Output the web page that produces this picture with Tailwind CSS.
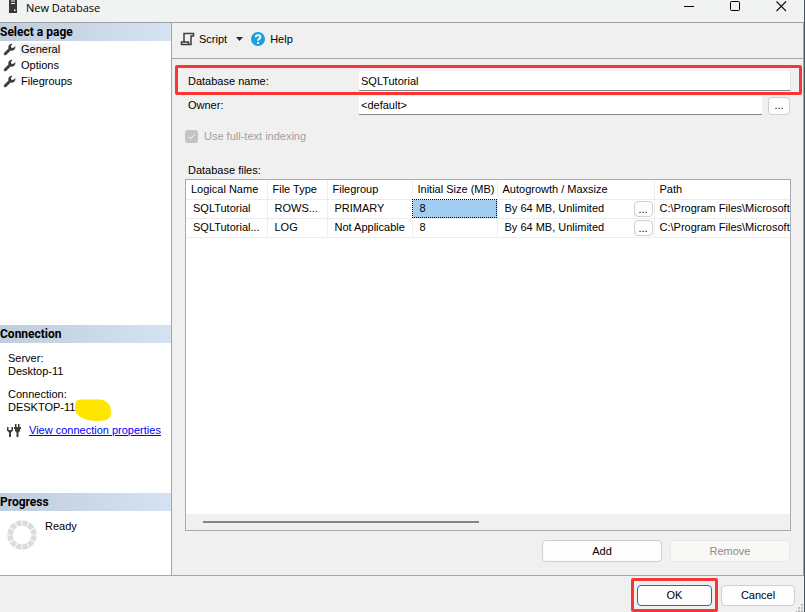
<!DOCTYPE html>
<html lang="en">
<head>
    <meta charset="UTF-8">
    <meta name="viewport" content="width=device-width, initial-scale=1.0">
    <title>New Database</title>
    <script src="https://cdn.jsdelivr.net/npm/@tailwindcss/browser@4"></script>
</head>
<body class="bg-[#f0f0f0] font-['Liberation_Sans',Arial,sans-serif] text-[11px] leading-[13px] text-black">
    <div class="relative flex h-screen flex-col overflow-hidden border-r border-[#46525c]">

        <!-- Title bar -->
        <header class="flex h-[23px] shrink-0 items-start justify-between border-b border-[#9c9ea1] bg-[#f1f3f3] pl-2">
            <div class="flex">
                <svg class="h-[14px] w-[10px]" viewBox="0 0 10 14" aria-hidden="true">
                    <path d="M1 0h8v13H1z" fill="#383838"/>
                    <path d="M3 1h4M3 3.500h4" stroke="#fff"/>
                    <path d="M6 9.500h1.500v1.500H6z" fill="#fff"/>
                </svg>
                <h1 class="ml-2 font-['Open_Sans','Noto_Sans',sans-serif] text-[11px] leading-[15px]">New Database</h1>
            </div>
            <div class="flex gap-[22px] pr-[11px]">
                <button aria-label="Minimize" class="h-3 w-6"><svg viewBox="0 0 24 12"><path d="M7 6.500h10" stroke="#000"/></svg></button>
                <button aria-label="Maximize" class="h-3 w-6"><svg viewBox="0 0 24 12"><rect x="7.500" y="1.500" width="9" height="9" rx="1" fill="none" stroke="#000"/></svg></button>
                <button aria-label="Close" class="h-3 w-6"><svg viewBox="0 0 24 12"><path d="M7.500 1.500l9.500 9.500M17 1.500L7.500 11" stroke="#1a1428" stroke-width="1.200"/></svg></button>
            </div>
        </header>

        <div class="flex min-h-0 flex-1 border-r border-b border-[#a5a6a9]">
            <!-- Sidebar -->
            <aside class="flex w-[172px] shrink-0 flex-col border-r border-[#a5a6a9] bg-white">
                <nav class="flex-1">
                    <h2 class="h-[18px] bg-linear-to-r from-[#bfcddd] to-[#d5e2f2] font-[Roboto,sans-serif] text-[12px] leading-[18px] font-bold">Select a page</h2>
                    <a href="#" class="flex h-4 items-center gap-1 pl-[3px]">
                        <svg class="h-[13px] w-[13px]" viewBox="0 0 13 13"><path d="M2.300 10.700L7.300 5.700" stroke="#3d3d3d" stroke-width="3" stroke-linecap="round"/><path d="M9.800.8L7.900 2.800l.4 1.900 1.900.4 2-2c.7 2.400-1 4.700-3.200 4.700C6.500 7.800 5 6 5.300 3.800 5.600 1.600 7.800.2 9.800.8z" fill="#3d3d3d"/></svg>
                        <span class="bg-[#f0f0f0] px-px">General</span>
                    </a>
                    <a href="#" class="flex h-4 items-center gap-1 pl-[3px]">
                        <svg class="h-[13px] w-[13px]" viewBox="0 0 13 13"><path d="M2.300 10.700L7.300 5.700" stroke="#3d3d3d" stroke-width="3" stroke-linecap="round"/><path d="M9.800.8L7.900 2.800l.4 1.900 1.900.4 2-2c.7 2.400-1 4.700-3.200 4.700C6.500 7.800 5 6 5.300 3.800 5.600 1.600 7.800.2 9.800.8z" fill="#3d3d3d"/></svg>
                        <span class="px-px">Options</span>
                    </a>
                    <a href="#" class="flex h-4 items-center gap-1 pl-[3px]">
                        <svg class="h-[13px] w-[13px]" viewBox="0 0 13 13"><path d="M2.300 10.700L7.300 5.700" stroke="#3d3d3d" stroke-width="3" stroke-linecap="round"/><path d="M9.800.8L7.900 2.800l.4 1.900 1.900.4 2-2c.7 2.400-1 4.700-3.200 4.700C6.500 7.800 5 6 5.300 3.800 5.600 1.600 7.800.2 9.800.8z" fill="#3d3d3d"/></svg>
                        <span class="px-px">Filegroups</span>
                    </a>
                </nav>

                <section class="h-[168px]">
                    <h2 class="h-[18px] bg-linear-to-r from-[#bfcddd] to-[#d5e2f2] font-[Roboto,sans-serif] text-[12px] leading-[18px] font-bold">Connection</h2>
                    <div class="pt-[9px] pl-2">
                        <p>Server:<br>Desktop-11</p>
                        <p class="mt-2.5">Connection:<br>DESKTOP-11</p>
                    </div>
                    <div class="relative mt-[9px] flex items-center gap-2 pl-[7px]">
                        <!-- user name is covered by a marker stroke -->
                        <svg class="absolute -top-6 left-[75px] h-[23px] w-9" viewBox="0 0 36 23" aria-hidden="true"><path d="M1 2Q3 0 7 .5H25Q32 1 35 7Q37 14 35 18Q33 22 23 22Q10 22 4 17Q-1 13 0 8Z" fill="#ffe600"/></svg>
                        <svg class="h-[15px] w-[14px]" viewBox="0 0 14 15" aria-hidden="true"><path d="M0 4v3.500l2 2V14h2V9.500l2-2V4H4.500v3h-3V4zM8 1h1.500v3H11V1h1.500v3H14v2h-1v2l-1.500 1.500V14h-2V9.500L8 8V6H7V4h1z" fill="#3d3d3d"/></svg>
                        <a href="#" class="text-[#0000ff] underline">View connection properties</a>
                    </div>
                </section>

                <section class="h-[82px]">
                    <h2 class="h-[18px] bg-linear-to-r from-[#bfcddd] to-[#d5e2f2] font-[Roboto,sans-serif] text-[12px] leading-[18px] font-bold">Progress</h2>
                    <div class="flex gap-2 pt-[9px] pl-[7px]">
                        <svg class="h-[30px] w-[30px]" viewBox="0 0 30 30" aria-hidden="true"><circle cx="15" cy="15" r="12" fill="none" stroke="#dcdcdc" stroke-width="5.500" pathLength="120" stroke-dasharray="8.500 1.500" stroke-dashoffset="-.75"/></svg>
                        <p>Ready</p>
                    </div>
                </section>
            </aside>

            <!-- Page content -->
            <main class="flex min-w-0 flex-1 flex-col">
                <div class="flex h-9 shrink-0 items-center border-b border-[#a5a6a9] pb-[3px] pl-2">
                    <button class="flex items-center gap-1">
                        <svg class="h-[14px] w-[15px]" viewBox="0 0 15 14" aria-hidden="true"><path d="M4 10V1.500H13.500V4H11V12.500H1.500V10H8.500V12.500" fill="none" stroke="#3d3d3d" stroke-width="1.500"/></svg>
                        <span>Script</span>
                    </button>
                    <button aria-label="Script options" class="ml-[9px]"><svg class="h-1 w-[7px]" viewBox="0 0 7 4"><path d="M0 0h7L3.500 4z" fill="#2b2b2b"/></svg></button>
                    <button class="ml-2 flex items-center gap-[5px]">
                        <svg class="h-[14px] w-[14px]" viewBox="0 0 14 14" aria-hidden="true"><circle cx="7" cy="7" r="7" fill="#1c9fe0"/><path d="M4.700 5.200C4.700 2.300 9.500 2.400 9.400 5.100C9.300 6.900 7 6.700 7 8.800M7 10v2" fill="none" stroke="#fff" stroke-width="1.800"/></svg>
                        <span>Help</span>
                    </button>
                </div>

                <form class="flex min-h-0 flex-1 flex-col" onsubmit="return false">
                    <div class="mt-1.5 mr-px ml-[3px] flex h-[30px] items-center rounded-xs border-3 border-[#fb3434] pt-0.5 pr-2 pl-2.5">
                        <label for="db-name" class="w-[171px] shrink-0">Database name:</label>
                        <input id="db-name" type="text" value="SQLTutorial" class="h-5 min-w-0 flex-1 border-r border-b border-r-[#e4e4e4] border-b-[#858585] bg-white px-0.5 outline-none">
                    </div>
                    <div class="mt-px flex items-center pr-[13px] pl-4">
                        <label for="db-owner" class="w-[171px] shrink-0">Owner:</label>
                        <input id="db-owner" type="text" value="&lt;default&gt;" class="h-[19px] min-w-0 flex-1 border-b border-[#858585] bg-white px-0.5 outline-none">
                        <button type="button" aria-label="Browse owners" class="ml-1.5 h-[18px] w-[22px] rounded-sm border border-[#cfcfcf] bg-[#fdfdfd]">...</button>
                    </div>
                    <div class="mt-[13px] flex h-4 items-center gap-1.5 pl-[13px] text-[#a0a0a0]">
                        <span class="relative flex">
                            <input id="fulltext" type="checkbox" checked disabled class="h-[13px] w-[13px] appearance-none rounded-[3px] bg-[#c3c3c3]">
                            <svg class="pointer-events-none absolute inset-0 h-[13px] w-[13px]" viewBox="0 0 13 13" aria-hidden="true"><path d="M3.500 6.800l2 2 4.200-4.300" fill="none" stroke="#fff"/></svg>
                        </span>
                        <label for="fulltext">Use full-text indexing</label>
                    </div>

                    <h3 class="mt-[19px] pl-4 leading-[14px]">Database files:</h3>
                    <div class="mt-0.5 mr-3 ml-[13px] flex min-h-0 flex-1 flex-col border border-[#a9abb0] bg-white">
                        <div class="min-h-0 flex-1 overflow-hidden">
                            <table class="w-full table-fixed text-left whitespace-nowrap [&_td]:overflow-hidden [&_td]:border-b [&_td]:border-[#ededed] [&_td]:pl-[7px] [&_td:last-child]:pl-[5px] [&_td:not(:last-child)]:border-r [&_th]:border-b [&_th]:border-[#ededed] [&_th]:pl-[5px] [&_th]:font-normal [&_th:not(:last-child)]:border-r">
                                <colgroup>
                                    <col class="w-[81px]">
                                    <col class="w-[60px]">
                                    <col class="w-[85px]">
                                    <col class="w-[85px]">
                                    <col class="w-[157px]">
                                    <col>
                                </colgroup>
                                <thead>
                                    <tr class="h-[19px]">
                                        <th>Logical Name</th>
                                        <th>File Type</th>
                                        <th>Filegroup</th>
                                        <th>Initial Size (MB)</th>
                                        <th>Autogrowth / Maxsize</th>
                                        <th>Path</th>
                                    </tr>
                                </thead>
                                <tbody>
                                    <tr class="h-[19px]">
                                        <td>SQLTutorial</td>
                                        <td>ROWS...</td>
                                        <td>PRIMARY</td>
                                        <td class="bg-[#a3cdf0] outline-1 -outline-offset-1 outline-black outline-dotted">8</td>
                                        <td>
                                            <div class="flex items-center justify-between pr-px">By 64 MB, Unlimited
                                                <button type="button" aria-label="Edit autogrowth" class="h-4 w-[19px] rounded-sm border border-[#cfcfcf] bg-[#fdfdfd] leading-3">...</button>
                                            </div>
                                        </td>
                                        <td>C:\Program Files\Microsoft</td>
                                    </tr>
                                    <tr class="h-[19px]">
                                        <td>SQLTutorial...</td>
                                        <td>LOG</td>
                                        <td>Not Applicable</td>
                                        <td>8</td>
                                        <td>
                                            <div class="flex items-center justify-between pr-px">By 64 MB, Unlimited
                                                <button type="button" aria-label="Edit log autogrowth" class="h-4 w-[19px] rounded-sm border border-[#cfcfcf] bg-[#fdfdfd] leading-3">...</button>
                                            </div>
                                        </td>
                                        <td>C:\Program Files\Microsoft</td>
                                    </tr>
                                </tbody>
                            </table>
                        </div>
                        <!-- Horizontal scrollbar -->
                        <div class="flex h-4 shrink-0 items-center bg-[#f0f0f0] px-[17px]">
                            <div class="h-0.5 w-[276px] bg-[#858585]"></div>
                        </div>
                    </div>

                    <div class="mt-[9px] mb-[13px] flex shrink-0 justify-end gap-2 pr-[13px]">
                        <button type="button" class="h-[22px] w-[120px] rounded-sm border border-[#cfcfcf] bg-[#fdfdfd]">Add</button>
                        <button type="button" disabled class="h-[22px] w-[120px] rounded-sm border border-[#e8e8e8] bg-[#f8f8f6] text-[#8c8c8c]">Remove</button>
                    </div>
                </form>
            </main>
        </div>

        <!-- Dialog buttons -->
        <footer class="flex shrink-0 items-center justify-end gap-[3px] pt-0.5 pr-[9px]">
            <div class="flex h-[34px] items-center rounded-xs border-3 border-[#fb3434] px-[3px]">
                <button class="h-[21px] w-[75px] rounded-sm border border-[#0078d4] bg-[#fdfdfd]">OK</button>
            </div>
            <button class="h-[21px] w-[74px] rounded-sm border border-[#cfcfcf] bg-[#fdfdfd]">Cancel</button>
        </footer>
        <svg class="absolute right-0 bottom-0 h-2 w-2" viewBox="0 0 8 8" aria-hidden="true"><path d="M5 0h2v2H5zM2 3h2v2H2zM5 3h2v2H5zM0 6h1v2H0zM2 6h2v2H2zM5 6h2v2H5z" fill="#bfbfbf"/></svg>
    </div>
</body>
</html>
